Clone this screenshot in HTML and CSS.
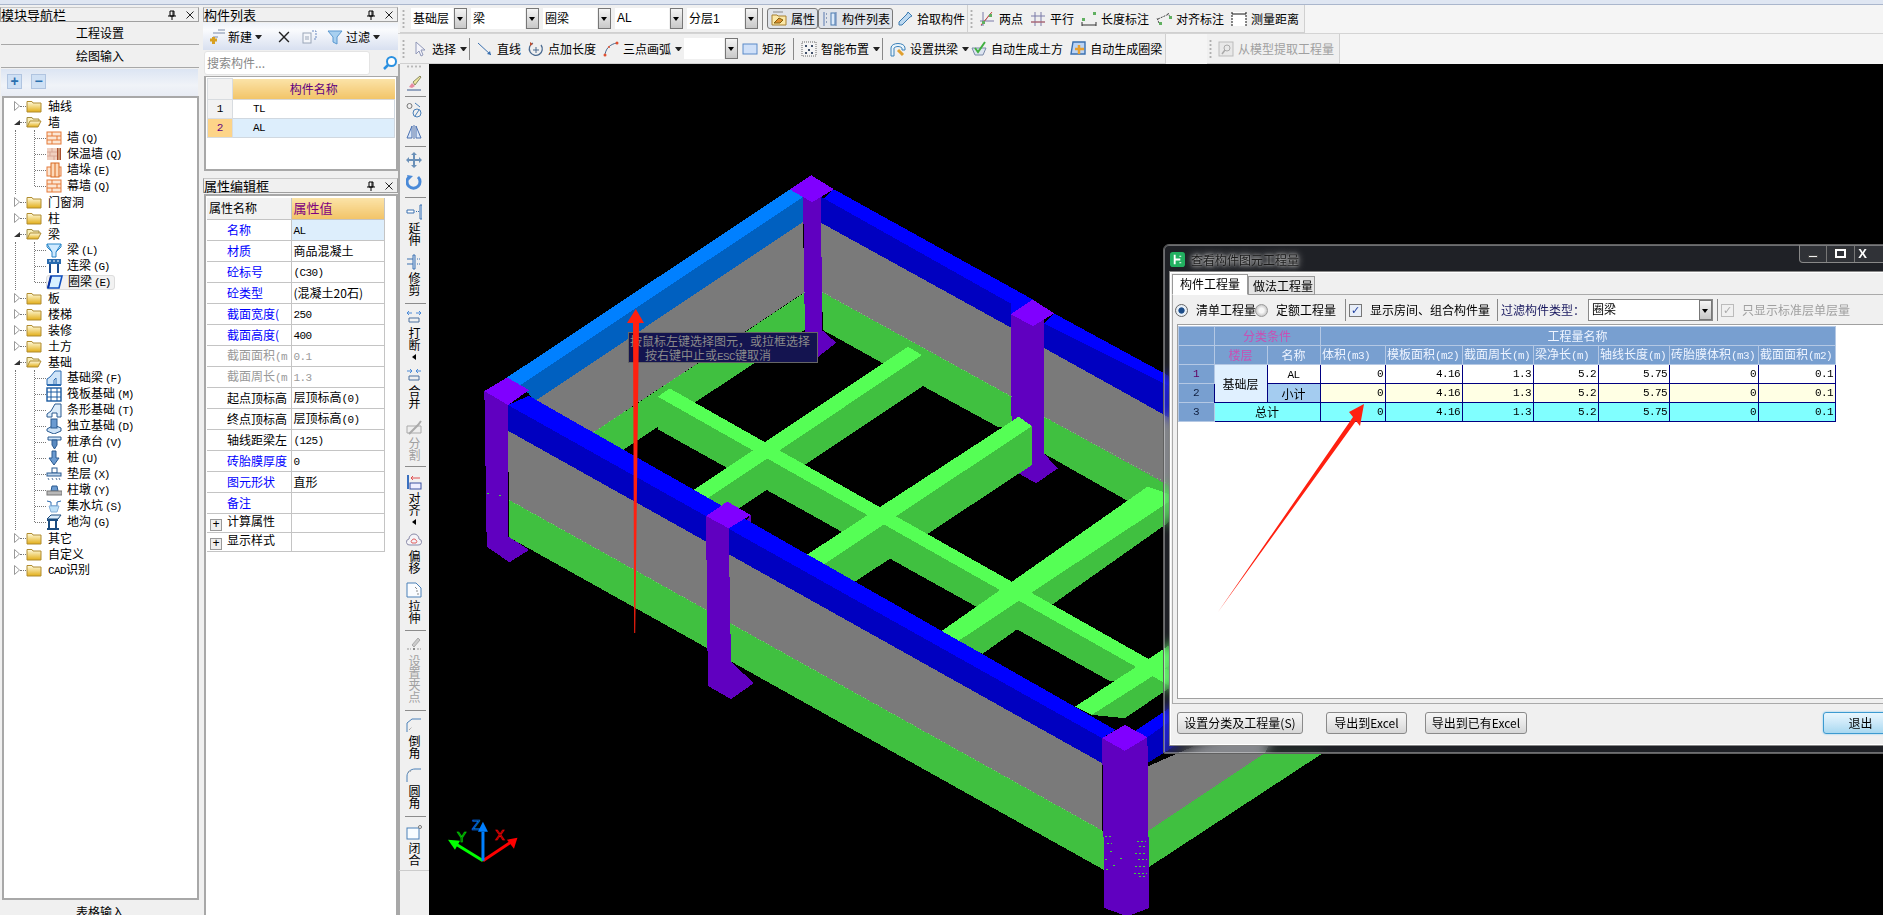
FILE: index.html
```html
<!DOCTYPE html>
<html lang="zh-CN">
<head>
<meta charset="utf-8">
<title>工程量</title>
<link rel="stylesheet" href="styles.css">
</head>
<body>
<svg class="defs" width="0" height="0" aria-hidden="true">
<defs>
<linearGradient id="gf" x1="0" y1="0" x2="0" y2="1"><stop offset="0" stop-color="#fffbe0"/><stop offset="1" stop-color="#e2ae18"/></linearGradient>
<symbol id="folder" viewBox="0 0 16 16"><path d="M1 3.5h5l1 1.5h8v9H1z" fill="url(#gf)" stroke="#b08c30"/></symbol>
<symbol id="folderopen" viewBox="0 0 16 16"><path d="M1 13V3.5h5l1 1.5h6v2" fill="#f8eeb8" stroke="#a08a40"/><path d="M1 13l3-6h11l-3 6z" fill="url(#gf)" stroke="#b08c30"/></symbol>
<symbol id="open" viewBox="0 0 6 10"><path d="M.5 .5l5 4.5-5 4.5z" fill="#fff" stroke="#999"/></symbol>
<symbol id="shut" viewBox="0 0 6 10"><path d="M0 8l6-5v5z" fill="#333"/></symbol>
<symbol id="brick" viewBox="0 0 16 16"><rect x="1" y="2" width="14" height="12" fill="#fbe6d4" stroke="#e57a38"/><path d="M1 6h14M1 10h14M6 2v4M11 6v4M6 10v4" stroke="#e57a38" fill="none"/></symbol>
<symbol id="insul" viewBox="0 0 16 16"><rect x="1" y="2" width="10" height="12" fill="#f0d0c0"/><path d="M1 6h10M1 10h10M6 2v4M4 6v4M8 10v4" stroke="#d8a898" fill="none"/><rect x="11" y="2" width="4" height="12" fill="#a85030"/><path d="M13 2v12" stroke="#f0d8b0"/></symbol>
<symbol id="pier" viewBox="0 0 16 16"><rect x="1" y="5" width="14" height="9" fill="#fbe6d4" stroke="#e57a38"/><rect x="5" y="1" width="8" height="14" fill="#fdd8b8" stroke="#d86820"/><path d="M9 1v14" stroke="#d86820"/></symbol>
<symbol id="bl" viewBox="0 0 16 16"><path d="M1 2h14v3l-5 5v5H6v-5L1 5z" fill="#cfeaff" stroke="#2a86c8"/><path d="M1 2l5 8M15 2l-5 8" stroke="#2a86c8"/></symbol>
<symbol id="lian" viewBox="0 0 16 16"><rect x="1" y="1" width="14" height="5" fill="#2a6cb0"/><path d="M3 3h2M7 3h2M11 3h2" stroke="#fff"/><path d="M4 6v9M12 6v9" stroke="#1a4c90" stroke-width="2"/></symbol>
<symbol id="quan" viewBox="0 0 16 16"><path d="M4 2h11l-3 12H1z" fill="#d8f0ff" stroke="#1050c0" stroke-width="1.6"/><path d="M4 2l-3 12" stroke="#0830a0" stroke-width="2"/></symbol>
<symbol id="f1" viewBox="0 0 16 16"><path d="M1 15V9l3-2 5-6h6v14H10V8L8 10v5z" fill="#cfe4f8" stroke="#2a6ab0"/><path d="M1 15h14" stroke="#2a6ab0" stroke-width="2"/></symbol>
<symbol id="f2" viewBox="0 0 16 16"><rect x="1" y="2" width="14" height="13" fill="#fff" stroke="#1a5aa0" stroke-width="1.4"/><path d="M1 6h14M1 11h14M5 2v13M11 2v13" stroke="#1a5aa0"/></symbol>
<symbol id="f3" viewBox="0 0 16 16"><path d="M1 15v-3l4-3 4-7h6v13H11v-4H6v4z" fill="#dcecfa" stroke="#2a5a90"/></symbol>
<symbol id="f4" viewBox="0 0 16 16"><path d="M1 11l7-4 7 3v3l-7 3-7-3z" fill="#cfe4f8" stroke="#2a5a90"/><rect x="5" y="1" width="6" height="9" fill="#6a9ad0" stroke="#2a5a90"/></symbol>
<symbol id="f5" viewBox="0 0 16 16"><path d="M2 3h13v3H2z" fill="#cfe4f8" stroke="#2a5a90"/><path d="M6 6h5v5l-2.500 4L6 11z" fill="#5a8ac0" stroke="#2a5a90"/></symbol>
<symbol id="f6" viewBox="0 0 16 16"><path d="M6 1h4v7h3l-5 7-5-7h3z" fill="#6a9ad0" stroke="#2a5a90"/></symbol>
<symbol id="f7" viewBox="0 0 16 16"><rect x="6" y="2" width="5" height="5" fill="#fff" stroke="#2a5a90"/><rect x="1" y="7" width="14" height="3" fill="#bcd4ec" stroke="#2a5a90"/><path d="M2 12l1 2M6 12l1 2M10 12l1 2M13 12l1 2" stroke="#5a7aa0"/></symbol>
<symbol id="f8" viewBox="0 0 16 16"><path d="M6 4h5l1 5H5z" fill="#6a9ad0" stroke="#2a5a90"/><rect x="1" y="9" width="15" height="4" fill="#b8b8b8" stroke="#777"/></symbol>
<symbol id="f9" viewBox="0 0 16 16"><path d="M1 3l4 1v4h6V4l4-1" fill="none" stroke="#2a6ab0"/><path d="M3 8l2 6h6l2-6z" fill="#bde0f8" stroke="#88b0d8"/></symbol>
<symbol id="f10" viewBox="0 0 16 16"><path d="M1 5l4-4h10l-3 4z" fill="#dcecfa" stroke="#1a4c80"/><rect x="1" y="5" width="11" height="2" fill="#1a4c80"/><path d="M3 7v7M10 7v7" stroke="#1a4c80" stroke-width="2"/><path d="M1 15h12" stroke="#1a4c80" stroke-width="2"/></symbol>
<symbol id="plusb" viewBox="0 0 16 16"><path d="M4 4h12M9 1h7M4 8h5" stroke="#7a8aa8" fill="none"/><path d="M1 11h7M4.500 8v7" stroke="#d8a020" stroke-width="3"/></symbol>
<symbol id="copyi" viewBox="0 0 16 16"><rect x="1" y="4" width="8" height="10" fill="#f4f6fa" stroke="#9aa6b8"/><path d="M3 8h4M3 10h4" stroke="#9aa6b8"/><path d="M10 2h4v8h-2" fill="none" stroke="#6a8ac0" stroke-dasharray="2 1"/></symbol>
<symbol id="funnel" viewBox="0 0 16 16"><path d="M1 2h14l-5 6v7l-4-2V8z" fill="#a8d0f0" stroke="#5a98d0"/></symbol>
<symbol id="glass" viewBox="0 0 16 16"><circle cx="9.500" cy="6.500" r="4.500" fill="#fff" stroke="#2a90e0" stroke-width="2"/><path d="M6 10l-4 4" stroke="#2a90e0" stroke-width="2.500"/></symbol>
<symbol id="pin" viewBox="0 0 10 10"><path d="M3 1h4v5H3zM1 6h8M5 6v4M6 1v5" fill="none" stroke="#000"/></symbol>
<symbol id="x" viewBox="0 0 10 10"><path d="M1.500 1.500l7 7M8.500 1.500l-7 7" stroke="#222" fill="none"/></symbol>
<symbol id="prop" viewBox="0 0 16 16"><path d="M1 4h5l1 1h8v9H1z" fill="#fbe8a8" stroke="#a88030"/><path d="M3 12l5-5 4 2-3 3z" fill="#e09030" stroke="#806010"/><path d="M2 1h10" stroke="#888"/></symbol>
<symbol id="list" viewBox="0 0 16 16"><path d="M2 1v14M14 1v14" stroke="#5a7ab0"/><path d="M4 3h2M4 7h2M4 11h2" stroke="#3a5a90" stroke-dasharray="1 1"/><rect x="9" y="2" width="4" height="12" fill="#dceafa" stroke="#4a7ab0"/></symbol>
<symbol id="drop" viewBox="0 0 16 16"><path d="M11 1l4 4-2 1-8 8H2v-3l8-8z" fill="#bcd8f0" stroke="#3a7ab0"/></symbol>
<symbol id="twop" viewBox="0 0 16 16"><path d="M4 1v14M1 10h14M12 2l-10 13" stroke="#7a7aa8" fill="none"/><path d="M13 1L2 14" stroke="#d05040"/><rect x="10" y="3" width="3" height="3" fill="#60b060"/><rect x="3" y="10" width="3" height="3" fill="#60b060"/></symbol>
<symbol id="para" viewBox="0 0 16 16"><path d="M5 1v14M11 1v14M1 5h14M1 11h14" stroke="#7a7aa8" fill="none"/><path d="M1 11h14" stroke="#c06060"/></symbol>
<symbol id="dim" viewBox="0 0 16 16"><path d="M1 14h14M1 11v4M15 11v4" stroke="#333" fill="none"/><rect x="1" y="7" width="3" height="3" fill="#60b060"/><rect x="12" y="1" width="3" height="3" fill="#60b060"/></symbol>
<symbol id="adim" viewBox="0 0 16 16"><path d="M2 8l11-5M3 12L1 7M14 6l-2-4" stroke="#444" stroke-dasharray="2 1" fill="none"/><rect x="3" y="11" width="3" height="3" fill="#60b060"/><rect x="13" y="5" width="3" height="3" fill="#60b060"/></symbol>
<symbol id="meas" viewBox="0 0 16 16"><rect x="1" y="1" width="14" height="14" fill="#fff"/><path d="M1 1v14M15 1v14" stroke="#111" stroke-dasharray="2 1"/><path d="M1 3h14" stroke="#111"/></symbol>
<symbol id="sel" viewBox="0 0 16 16"><path d="M4 1v12l3-3 2 5 2-1-2-5h4z" fill="#f4f4fa" stroke="#9098b8"/></symbol>
<symbol id="line" viewBox="0 0 16 16"><path d="M1 2l13 12" stroke="#3a70b0" fill="none"/><path d="M14 14l-4-1 3-3z" fill="#3a70b0"/></symbol>
<symbol id="ptlen" viewBox="0 0 16 16"><path d="M5 2a6.500 6.500 0 1 0 8 2" fill="none" stroke="#4a6a90" stroke-width="1.300"/><path d="M8 6v6M5 9h6" stroke="#4a6a90"/><path d="M2 1l3 2-3 2z" fill="#c05030"/></symbol>
<symbol id="arc" viewBox="0 0 16 16"><path d="M2 15C2 8 7 3 14 2" fill="none" stroke="#4a6a90"/><circle cx="2" cy="14" r="1.500" fill="#e05030"/><circle cx="14" cy="2" r="1.500" fill="#e05030"/><circle cx="6" cy="6" r="1" fill="#e05030"/></symbol>
<symbol id="rect" viewBox="0 0 16 16"><rect x="1" y="3" width="14" height="10" fill="#cfe0f8" stroke="#5a8ac8"/></symbol>
<symbol id="smart" viewBox="0 0 16 16"><rect x="1" y="1" width="14" height="14" fill="#f4f4f4" stroke="#666" stroke-dasharray="1 1"/><path d="M4 4h2v2H4zM10 4h2v2h-2zM7 8h2v2H7zM4 11h2v2H4zM10 11h2v2h-2z" fill="#40506a"/></symbol>
<symbol id="arch" viewBox="0 0 16 16"><path d="M1 7C1 1 15 1 15 7v2h-3V7C10 5 6 5 4 7v8H1z" fill="#e8f4fc" stroke="#3a80b8"/><path d="M8 9l5 5" stroke="#e0a030" stroke-width="3"/></symbol>
<symbol id="auto1" viewBox="0 0 16 16"><path d="M1 7l3 7h8l3-7z" fill="#dce4f0" stroke="#7a8aa8"/><path d="M4 7l3 4 7-10" fill="none" stroke="#40b040" stroke-width="2"/></symbol>
<symbol id="auto2" viewBox="0 0 16 16"><path d="M3 1h12v12H1z" fill="#bcd4f4" stroke="#3a70b0" stroke-width="1.400"/><path d="M9 4v9M5 8h9" stroke="#e8a030" stroke-width="2.500"/></symbol>
<symbol id="extract" viewBox="0 0 16 16"><rect x="1" y="1" width="14" height="14" fill="#e8e8e8" stroke="#bbb"/><circle cx="9" cy="7" r="3" fill="none" stroke="#aaa"/><path d="M7 9l-3 4" stroke="#aaa" stroke-width="1.500"/></symbol>
<symbol id="brush" viewBox="0 0 16 16"><path d="M1 15h14" stroke="#3a5a90"/><path d="M3 12l3-4 3 3-3 2z" fill="#e88aa0"/><path d="M7 7l7-6 1 1-6 8z" fill="#f0e8a0" stroke="#8a8a60"/></symbol>
<symbol id="link" viewBox="0 0 16 16"><circle cx="3.500" cy="4" r="2.500" fill="none" stroke="#777"/><circle cx="11" cy="11" r="4" fill="none" stroke="#4a80b8"/><path d="M9 14l4-6" stroke="#4a80b8"/><path d="M9 1l5 4" stroke="#4a80b8"/></symbol>
<symbol id="mirror" viewBox="0 0 16 16"><path d="M6 2L1 14h5zM10 2l5 12h-5z" fill="#dce8f8" stroke="#4a70b0"/><path d="M8 1v14" stroke="#4a70b0"/></symbol>
<symbol id="move" viewBox="0 0 16 16"><path d="M8 1v14M1 8h14" stroke="#6a90b8" stroke-width="2"/><path d="M8 0l3 3H5zM8 16l3-3H5zM0 8l3-3v6zM16 8l-3-3v6z" fill="#6a90b8"/></symbol>
<symbol id="rot" viewBox="0 0 16 16"><path d="M3 3a6.500 6.500 0 1 0 9 0" fill="none" stroke="#4a8ad8" stroke-width="3"/><path d="M1 1l6 1-4 4z" fill="#4a8ad8"/></symbol>
<symbol id="ext" viewBox="0 0 16 16"><path d="M1 6h7v3H1z" fill="#fff" stroke="#3a70b0"/><path d="M10 7.500h3" stroke="#3a70b0" stroke-dasharray="1 1"/><path d="M14 1h2v14h-2z" fill="#dce8f8" stroke="#3a70b0"/></symbol>
<symbol id="trim" viewBox="0 0 16 16"><path d="M1 5h6M1 10h6" stroke="#3a70b0"/><path d="M7 1h2v14H7z" fill="#dce8f8" stroke="#3a70b0"/><path d="M11 5h4M11 10h4" stroke="#3a70b0" stroke-dasharray="1 1"/></symbol>
<symbol id="brk" viewBox="0 0 16 16"><path d="M1 4h5M1 4l2-2M1 4l2 2M15 4h-5M15 4l-2-2M15 4l-2 2" stroke="#4a8ad8" fill="none"/><path d="M3 9h10M3 13h10M3 9v4M13 9v4" stroke="#4a70a0" fill="none"/></symbol>
<symbol id="mrg" viewBox="0 0 16 16"><path d="M1 4h5M6 4L4 2M6 4L4 6M15 4h-5M10 4l2-2M10 4l2 2" stroke="#4a8ad8" fill="none"/><path d="M3 9h10M3 13h10M3 9v4M13 9v4" stroke="#4a70a0" fill="none"/></symbol>
<symbol id="split" viewBox="0 0 16 16"><path d="M1 7h14v7H1z" fill="#eee" stroke="#aaa"/><path d="M3 15l9-9 3-4" stroke="#aaa" stroke-width="2" fill="none"/></symbol>
<symbol id="align" viewBox="0 0 16 16"><path d="M2 1v14" stroke="#3a70c0" stroke-width="2"/><path d="M14 4H5M5 4l2-2M5 4l2 2" stroke="#e05050" fill="none"/><rect x="4" y="9" width="11" height="6" fill="#eef" stroke="#3a50a0"/></symbol>
<symbol id="off" viewBox="0 0 16 16"><path d="M4 13a3 3 0 0 1-1-6 5 5 0 0 1 10 0 3 3 0 0 1-1 6z" fill="#f4f4f8" stroke="#8a8aa8"/><path d="M6 11a2 2 0 0 1 0-3 2.500 2.500 0 0 1 4 0 2 2 0 0 1 0 3z" fill="none" stroke="#e06060"/></symbol>
<symbol id="strch" viewBox="0 0 16 16"><path d="M1 1h9l5 5v9H1z" fill="#fafcff" stroke="#4a80b8"/><path d="M9 5l2 2M10 9h2M11 12h2" stroke="#888"/></symbol>
<symbol id="clamp" viewBox="0 0 16 16"><path d="M6 8l6-7 2 2-6 7z" fill="#ccc" stroke="#aaa"/><path d="M1 12h4M11 12h4" stroke="#999" stroke-dasharray="2 1"/><rect x="7" y="11" width="2" height="2" fill="#888"/></symbol>
<symbol id="cham" viewBox="0 0 16 16"><path d="M1 15V6l5-4h9" fill="none" stroke="#4a80b8"/><path d="M3 13l3-3" stroke="#888" stroke-dasharray="1 1"/></symbol>
<symbol id="fill" viewBox="0 0 16 16"><path d="M1 15V9C1 5 5 2 9 2h6" fill="none" stroke="#4a80b8"/><path d="M2 5l3-1" stroke="#888" stroke-dasharray="1 1"/></symbol>
<symbol id="close" viewBox="0 0 16 16"><rect x="1" y="4" width="12" height="11" fill="#f8fcff" stroke="#4a80b8"/><circle cx="14" cy="3" r="1.500" fill="#fff" stroke="#777"/></symbol>
</defs>
</svg>

<div class="app">
  <div class="topstrip"></div>
  <div class="main">
    <aside class="nav">
      <div class="ptitle"><span class="ptname">模块导航栏</span><svg class="pi"><use href="#pin"/></svg><svg class="pi"><use href="#x"/></svg></div>
      <div class="navbtn">工程设置</div>
      <div class="navbtn">绘图输入</div>
      <div class="navtools"><span class="sq">+</span><span class="sq">−</span></div>
      <div class="tree">
        <div class="row"><svg class="exp"><use href="#open"/></svg><i class="dot"></i><svg class="ic"><use href="#folder"/></svg><span class="lb">轴线</span></div>
        <div class="row"><svg class="exp"><use href="#shut"/></svg><i class="dot"></i><svg class="ic"><use href="#folderopen"/></svg><span class="lb">墙</span></div>
        <div class="kids">
          <div class="row kid"><i class="kdot"></i><svg class="ic"><use href="#brick"/></svg><span class="lb">墙<b class="m k">(Q)</b></span></div>
          <div class="row kid"><i class="kdot"></i><svg class="ic"><use href="#insul"/></svg><span class="lb">保温墙<b class="m k">(Q)</b></span></div>
          <div class="row kid"><i class="kdot"></i><svg class="ic"><use href="#pier"/></svg><span class="lb">墙垛<b class="m k">(E)</b></span></div>
          <div class="row kid"><i class="kdot"></i><svg class="ic"><use href="#brick"/></svg><span class="lb">幕墙<b class="m k">(Q)</b></span></div>
        </div>
        <div class="row"><svg class="exp"><use href="#open"/></svg><i class="dot"></i><svg class="ic"><use href="#folder"/></svg><span class="lb">门窗洞</span></div>
        <div class="row"><svg class="exp"><use href="#open"/></svg><i class="dot"></i><svg class="ic"><use href="#folder"/></svg><span class="lb">柱</span></div>
        <div class="row"><svg class="exp"><use href="#shut"/></svg><i class="dot"></i><svg class="ic"><use href="#folderopen"/></svg><span class="lb">梁</span></div>
        <div class="kids">
          <div class="row kid"><i class="kdot"></i><svg class="ic"><use href="#bl"/></svg><span class="lb">梁<b class="m k">(L)</b></span></div>
          <div class="row kid"><i class="kdot"></i><svg class="ic"><use href="#lian"/></svg><span class="lb">连梁<b class="m k">(G)</b></span></div>
          <div class="row kid"><i class="kdot"></i><span class="selbox"><svg class="ic"><use href="#quan"/></svg><span class="lb">圈梁<b class="m k">(E)</b></span></span></div>
        </div>
        <div class="row"><svg class="exp"><use href="#open"/></svg><i class="dot"></i><svg class="ic"><use href="#folder"/></svg><span class="lb">板</span></div>
        <div class="row"><svg class="exp"><use href="#open"/></svg><i class="dot"></i><svg class="ic"><use href="#folder"/></svg><span class="lb">楼梯</span></div>
        <div class="row"><svg class="exp"><use href="#open"/></svg><i class="dot"></i><svg class="ic"><use href="#folder"/></svg><span class="lb">装修</span></div>
        <div class="row"><svg class="exp"><use href="#open"/></svg><i class="dot"></i><svg class="ic"><use href="#folder"/></svg><span class="lb">土方</span></div>
        <div class="row"><svg class="exp"><use href="#shut"/></svg><i class="dot"></i><svg class="ic"><use href="#folderopen"/></svg><span class="lb">基础</span></div>
        <div class="kids">
          <div class="row kid"><i class="kdot"></i><svg class="ic"><use href="#f1"/></svg><span class="lb">基础梁<b class="m k">(F)</b></span></div>
          <div class="row kid"><i class="kdot"></i><svg class="ic"><use href="#f2"/></svg><span class="lb">筏板基础<b class="m k">(M)</b></span></div>
          <div class="row kid"><i class="kdot"></i><svg class="ic"><use href="#f3"/></svg><span class="lb">条形基础<b class="m k">(T)</b></span></div>
          <div class="row kid"><i class="kdot"></i><svg class="ic"><use href="#f4"/></svg><span class="lb">独立基础<b class="m k">(D)</b></span></div>
          <div class="row kid"><i class="kdot"></i><svg class="ic"><use href="#f5"/></svg><span class="lb">桩承台<b class="m k">(V)</b></span></div>
          <div class="row kid"><i class="kdot"></i><svg class="ic"><use href="#f6"/></svg><span class="lb">桩<b class="m k">(U)</b></span></div>
          <div class="row kid"><i class="kdot"></i><svg class="ic"><use href="#f7"/></svg><span class="lb">垫层<b class="m k">(X)</b></span></div>
          <div class="row kid"><i class="kdot"></i><svg class="ic"><use href="#f8"/></svg><span class="lb">柱墩<b class="m k">(Y)</b></span></div>
          <div class="row kid"><i class="kdot"></i><svg class="ic"><use href="#f9"/></svg><span class="lb">集水坑<b class="m k">(S)</b></span></div>
          <div class="row kid"><i class="kdot"></i><svg class="ic"><use href="#f10"/></svg><span class="lb">地沟<b class="m k">(G)</b></span></div>
        </div>
        <div class="row"><svg class="exp"><use href="#open"/></svg><i class="dot"></i><svg class="ic"><use href="#folder"/></svg><span class="lb">其它</span></div>
        <div class="row"><svg class="exp"><use href="#open"/></svg><i class="dot"></i><svg class="ic"><use href="#folder"/></svg><span class="lb">自定义</span></div>
        <div class="row"><svg class="exp"><use href="#open"/></svg><i class="dot"></i><svg class="ic"><use href="#folder"/></svg><span class="lb"><b class="m">CAD</b>识别</span></div>
      </div>
      <div class="navbtn navlast">表格输入</div>
    </aside>

    <section class="side">
      <div class="ptitle"><span class="ptname">构件列表</span><svg class="pi"><use href="#pin"/></svg><svg class="pi"><use href="#x"/></svg></div>
      <div class="listtools">
        <svg class="ic"><use href="#plusb"/></svg><span>新建</span><i class="caret"></i>
        <svg class="xbig"><use href="#x"/></svg>
        <svg class="ic"><use href="#copyi"/></svg>
        <svg class="ic"><use href="#funnel"/></svg><span>过滤</span><i class="caret"></i>
      </div>
      <div class="searchrow"><div class="search">搜索构件...</div><svg class="ic"><use href="#glass"/></svg></div>
      <div class="listbox">
        <table class="clist">
          <tr class="h"><th class="c0"></th><th class="hot">构件名称</th></tr>
          <tr><td class="c0">1</td><td class="nm">TL</td></tr>
          <tr class="on"><td class="c0">2</td><td class="nm">AL</td></tr>
        </table>
      </div>
      <div class="ptitle ptprop"><span class="ptname">属性编辑框</span><svg class="pi"><use href="#pin"/></svg><svg class="pi"><use href="#x"/></svg></div>
      <div class="propbox">
        <table class="props">
          <tr class="ph"><th>属性名称</th><th class="hot2">属性值</th></tr>
          <tr class="blue first"><td><span>名称</span></td><td><b class="m">AL</b></td></tr>
          <tr class="blue"><td><span>材质</span></td><td>商品混凝土</td></tr>
          <tr class="blue"><td><span>砼标号</span></td><td><b class="m">(C30)</b></td></tr>
          <tr class="blue"><td><span>砼类型</span></td><td>(混凝土20石)</td></tr>
          <tr class="blue"><td><span>截面宽度(</span></td><td><b class="m">250</b></td></tr>
          <tr class="blue"><td><span>截面高度(</span></td><td><b class="m">400</b></td></tr>
          <tr class="gray"><td><span>截面面积<b class="m">(m</b></span></td><td><b class="m">0.1</b></td></tr>
          <tr class="gray"><td><span>截面周长<b class="m">(m</b></span></td><td><b class="m">1.3</b></td></tr>
          <tr><td><span>起点顶标高</span></td><td>层顶标高<b class="m">(0)</b></td></tr>
          <tr><td><span>终点顶标高</span></td><td>层顶标高<b class="m">(0)</b></td></tr>
          <tr><td><span>轴线距梁左</span></td><td><b class="m">(125)</b></td></tr>
          <tr class="blue"><td><span>砖胎膜厚度</span></td><td><b class="m">0</b></td></tr>
          <tr class="blue"><td><span>图元形状</span></td><td>直形</td></tr>
          <tr class="blue"><td><span>备注</span></td><td></td></tr>
          <tr class="grp"><td><i class="pm">+</i>计算属性</td><td></td></tr>
          <tr class="grp"><td><i class="pm">+</i>显示样式</td><td></td></tr>
        </table>
      </div>
    </section>

    <div class="work">
      <div class="tbrow r1">
        <div class="tb tb1">
          <i class="grip"></i>
          <div class="combo w56"><span>基础层</span><i class="cbtn"></i></div>
          <div class="combo w68"><span>梁</span><i class="cbtn"></i></div>
          <div class="combo w68"><span>圈梁</span><i class="cbtn"></i></div>
          <div class="combo w68"><span class="lat">AL</span><i class="cbtn"></i></div>
          <div class="combo w71"><span>分层<b class="lat">1</b></span><i class="cbtn"></i></div>
          <i class="vsep"></i>
          <div class="tog t51"><svg class="ic"><use href="#prop"/></svg>属性</div>
          <div class="tog t75"><svg class="ic"><use href="#list"/></svg>构件列表</div>
          <div class="ti"><svg class="ic"><use href="#drop"/></svg>拾取构件</div>
        </div>
        <div class="tb tb2">
          <i class="grip"></i>
          <div class="ti"><svg class="ic"><use href="#twop"/></svg>两点</div>
          <div class="ti"><svg class="ic"><use href="#para"/></svg>平行</div>
          <div class="ti"><svg class="ic"><use href="#dim"/></svg>长度标注</div>
          <div class="ti"><svg class="ic"><use href="#adim"/></svg>对齐标注</div>
          <div class="ti"><svg class="ic"><use href="#meas"/></svg>测量距离</div>
        </div>
      </div>
      <div class="tbrow r2">
        <div class="tb tb3">
          <i class="grip"></i>
          <div class="ti"><svg class="ic"><use href="#sel"/></svg>选择</div><i class="caret car"></i>
          <i class="vsep"></i>
          <div class="ti"><svg class="ic"><use href="#line"/></svg>直线</div>
          <div class="ti"><svg class="ic"><use href="#ptlen"/></svg>点加长度</div>
          <div class="ti"><svg class="ic"><use href="#arc"/></svg>三点画弧</div><i class="caret car"></i>
          <div class="combo w54"><span></span><i class="cbtn"></i></div>
          <div class="ti"><svg class="ic"><use href="#rect"/></svg>矩形</div>
          <i class="vsep"></i>
          <div class="ti"><svg class="ic"><use href="#smart"/></svg>智能布置</div><i class="caret car"></i>
          <i class="vsep"></i>
          <div class="ti"><svg class="ic"><use href="#arch"/></svg>设置拱梁</div><i class="caret car"></i>
          <div class="ti"><svg class="ic"><use href="#auto1"/></svg>自动生成土方</div>
          <div class="ti"><svg class="ic"><use href="#auto2"/></svg>自动生成圈梁</div>
        </div>
        <div class="tb tb4">
          <i class="grip"></i>
          <div class="ti dis"><svg class="ic"><use href="#extract"/></svg>从模型提取工程量</div>
        </div>
      </div>
      <div class="stage">
        <nav class="vt">
          <i class="vgrip"></i>
          <div class="vi"><svg class="ic"><use href="#brush"/></svg></div>
          <i class="hs"></i>
          <div class="vi"><svg class="ic"><use href="#link"/></svg></div>
          <div class="vi"><svg class="ic"><use href="#mirror"/></svg></div>
          <i class="hs"></i>
          <div class="vi"><svg class="ic"><use href="#move"/></svg></div>
          <div class="vi"><svg class="ic"><use href="#rot"/></svg></div>
          <i class="hs"></i>
          <div class="vi"><svg class="ic"><use href="#ext"/></svg><span class="vtx">延伸</span></div>
          <div class="vi"><svg class="ic"><use href="#trim"/></svg><span class="vtx">修剪</span></div>
          <i class="hs"></i>
          <div class="vi"><svg class="ic"><use href="#brk"/></svg><span class="vtx">打断</span><i class="lcaret"></i></div>
          <div class="vi"><svg class="ic"><use href="#mrg"/></svg><span class="vtx">合并</span></div>
          <div class="vi dis"><svg class="ic"><use href="#split"/></svg><span class="vtx">分割</span></div>
          <i class="hs"></i>
          <div class="vi"><svg class="ic"><use href="#align"/></svg><span class="vtx">对齐</span><i class="lcaret"></i></div>
          <div class="vi"><svg class="ic"><use href="#off"/></svg><span class="vtx">偏移</span></div>
          <div class="vi"><svg class="ic"><use href="#strch"/></svg><span class="vtx">拉伸</span></div>
          <i class="hs"></i>
          <div class="vi dis"><svg class="ic"><use href="#clamp"/></svg><span class="vtx">设置夹点</span></div>
          <i class="hs"></i>
          <div class="vi"><svg class="ic"><use href="#cham"/></svg><span class="vtx">倒角</span></div>
          <div class="vi"><svg class="ic"><use href="#fill"/></svg><span class="vtx">圆角</span></div>
          <i class="hs"></i>
          <div class="vi vlast"><svg class="ic"><use href="#close"/></svg><span class="vtx">闭合</span></div>
        </nav>
        <div class="canvas">
          <svg class="model" viewBox="428 64 1455 851" shape-rendering="crispEdges">
            <g transform="translate(440 160) scale(.4719 .33333)">
              <polygon class="gr" points="772,397 772,509 380,875 318,822"/>
              <polygon class="gy" points="768,185 770,397 318,822 197,725"/>
              <polygon class="lb1" points="740,88 768,110 165,678 137,655"/>
              <polygon class="lb2" points="768,110 768,185 197,725 186,700 165,678"/>
              <polygon class="gr" points="808,395 1210,710 1210,800 1180,800 1022,678 935,608 810,510"/>
              <polygon class="gr" points="1278,770 1560,985 1560,1020 1500,985 1465,1030 1278,880"/>
              <polygon class="gy" points="806,188 806,395 1210,710 1210,502"/>
              <polygon class="gy" points="1278,563 1560,780 1560,990 1278,770"/>
              <polygon class="b1" points="833,87 1255,418 1208,462 806,125"/>
              <polygon class="b2" points="806,110 1208,430 1208,502 806,188"/>
              <polygon class="b1" points="1300,460 1560,660 1560,690 1278,490"/>
              <polygon class="b2" points="1278,490 1560,690 1560,785 1278,563"/>
              <polygon class="pd" points="768,108 806,108 808,510 838,548 800,590 772,560"/>
              <polygon class="pt" points="785,45 833,87 787,126 740,88"/>
              <polygon class="pd" points="1208,462 1278,462 1278,880 1308,925 1262,970 1225,940 1210,800"/>
              <polygon class="pt" points="1255,418 1300,460 1255,498 1208,462"/>
              <polygon class="gr" points="1020,585 1022,678 590,1085 560,1020"/>
              <polygon class="gr" points="1253,798 1253,915 875,1268 810,1215"/>
              <polygon class="gr" points="1560,1005 1560,1070 1148,1482 1095,1445"/>
              <polygon class="gr" points="1560,1503 1560,1570 1450,1675 1380,1665"/>
              <polygon class="gr" points="460,710 460,808 1420,1565 1560,1555"/>
              <polygon class="lg" points="990,560 1020,585 560,1020 530,995"/>
              <polygon class="lg" points="1225,770 1253,798 810,1215 775,1185"/>
              <polygon class="lg" points="1498,980 1560,1010 1095,1445 1060,1415"/>
              <polygon class="lg" points="1560,1442 1560,1503 1380,1665 1345,1640"/>
              <polygon class="lg" points="485,685 1560,1545 1560,1590 460,710"/>
              <polygon class="pd" points="657,1065 657,1105 610,1140"/>
              <polygon class="gy" points="142,812 1402,1810 1402,2015 144,1020"/>
              <polygon class="gr" points="144,1020 1405,2015 1405,2130 144,1132"/>
              <polygon class="b1" points="186,707 1430,1710 1402,1735 142,735"/>
              <polygon class="b2" points="142,735 1402,1735 1402,1810 142,812"/>
              <path class="edge" d="M808 395L1210 710M1278 770L1560 985M772 397L318 822M144 1020L1405 2015"/>
              <polygon class="gy" points="1498,1820 1498,2015 1748,1779 1790,1640"/>
              <polygon class="gr" points="1498,2015 1498,2125 1871,1779 1748,1779"/>
              <polygon class="b1" points="1470,1715 1560,1630 1560,1670 1498,1732"/>
              <polygon class="b2" points="1498,1732 1560,1670 1560,1755 1498,1810"/>
              <polygon class="pd" points="92,693 142,735 143,1130 187,1170 145,1207 97,1160"/>
              <polygon class="pt" points="140,652 187,690 142,735 92,693"/>
              <polygon class="pd" points="562,1068 610,1105 615,1505 663,1570 615,1618 566,1578"/>
              <polygon class="pt" points="607,1025 657,1065 610,1105 562,1068"/>
              <polygon class="pd" points="1402,1735 1498,1732 1502,2245 1455,2270 1407,2245"/>
              <polygon class="pt" points="1450,1695 1498,1732 1450,1773 1402,1735"/>
              <path class="spk" d="M1408 2030h12M1412 2050h10M1418 2075h10M1408 2100h8M1425 2118h8M1440 2095h8M1410 2128h6M1475 2045h20M1480 2060h16M1472 2080h24M1478 2100h20M1472 2120h24M1470 2140h28M1480 2150h16M98 1000h6M122 1008h8"/>
            </g>
            <g class="axes" shape-rendering="auto">
              <path class="ax-g" d="M482 861L456 845"/><polygon class="ax-gf" points="447,840 459,841 454,850"/>
              <path class="ax-r" d="M482 861L509 843"/><polygon class="ax-rf" points="516.500,838 513,849 506,840"/>
              <path class="ax-b" d="M482 861V832"/><polygon class="ax-bf" points="482,822 487,832 477,832"/>
              <text class="tz" x="471" y="830">Z</text>
              <text class="ty" x="456" y="842">Y</text>
              <text class="tx" x="494" y="840">X</text>
            </g>
          </svg>
          <div class="tip"><div>按鼠标左键选择图元，或拉框选择</div><div class="tip2">按右键中止或<b class="m">ESC</b>键取消</div></div>
        </div>
      </div>
    </div>
  </div>

  <div class="dlg">
    <div class="cap">
      <svg class="capic" viewBox="0 0 16 16"><rect width="16" height="16" rx="3" fill="#22b060"/><path d="M5 3v10M5 8h6M11 4v1M11 11v1" stroke="#fff" stroke-width="2"/></svg>
      <span class="captx">查看构件图元工程量</span>
      <div class="wbtns"><span class="wb wmin"><i></i></span><span class="wb wmax"><i></i></span><span class="wb wcl">X</span></div>
    </div>
    <div class="client">
      <div class="tabs"><span class="tab on">构件工程量</span><span class="tab">做法工程量</span></div>
      <div class="tabpanel">
        <div class="filt">
          <span class="radio on"></span><span class="ft f1">清单工程量</span>
          <span class="radio"></span><span class="ft f2">定额工程量</span>
          <i class="fsep"></i>
          <span class="chk">✓</span><span class="ft f3">显示房间、组合构件量</span>
          <i class="fsep"></i>
          <span class="ft f4">过滤构件类型：</span>
          <div class="fcombo"><span>圈梁</span><i class="cbtn"></i></div>
          <i class="fsep"></i>
          <span class="chk dis">✓</span><span class="ft f5">只显示标准层单层量</span>
        </div>
        <div class="gridbox">
          <table class="qty">
            <colgroup><col class="c36"><col class="c53"><col class="c53"><col class="c65"><col class="c77"><col class="c71"><col class="c65"><col class="c71b"><col class="c88"><col class="c78"></colgroup>
            <tr class="hd"><td></td><td colspan="2" class="pink">分类条件</td><td colspan="7">工程量名称</td></tr>
            <tr class="hd"><td></td><td class="pink">楼层</td><td>名称</td><td class="lft">体积<b class="m">(m3)</b></td><td class="lft">模板面积<b class="m">(m2)</b></td><td class="lft">截面周长<b class="m">(m)</b></td><td class="lft">梁净长<b class="m">(m)</b></td><td class="lft">轴线长度<b class="m">(m)</b></td><td class="lft">砖胎膜体积<b class="m">(m3)</b></td><td class="lft">截面面积<b class="m">(m2)</b></td></tr>
            <tr class="d w"><td class="rh pur">1</td><td rowspan="2" class="base">基础层</td><td class="ctr"><b class="m">AL</b></td><td>0</td><td>4.16</td><td>1.3</td><td>5.2</td><td>5.75</td><td>0</td><td>0.1</td></tr>
            <tr class="d y"><td class="rh">2</td><td class="sub">小计</td><td>0</td><td>4.16</td><td>1.3</td><td>5.2</td><td>5.75</td><td>0</td><td>0.1</td></tr>
            <tr class="d c"><td class="rh">3</td><td colspan="2" class="ctr tot">总计</td><td>0</td><td>4.16</td><td>1.3</td><td>5.2</td><td>5.75</td><td>0</td><td>0.1</td></tr>
          </table>
        </div>
      </div>
      <div class="foot">
        <span class="btn b1w">设置分类及工程量(S)</span>
        <span class="btn b2w">导出到Excel</span>
        <span class="btn b3w">导出到已有Excel</span>
        <span class="btn quit">退出</span>
      </div>
    </div>
  </div>

  <svg class="notes" viewBox="0 0 1883 915">
    <polygon points="635.800,309 627,323 633,323 634.200,633 635.200,633 639,323 644,323"/>
    <polygon points="1364,404 1349,412 1353,417 1218,612 1356,421 1360,426"/>
  </svg>
</div>
</body>
</html>
```
FILE: styles.css
```css
* { box-sizing: border-box; }
html, body { margin: 0; height: 100%; overflow: hidden; }
body { font: 12px/14px "Noto Sans CJK SC", "Liberation Sans", sans-serif; color: #000; background: #f0f0f0; }
.defs { position: absolute; }
b.m, .m { font: 11px/14px "Liberation Mono", monospace; letter-spacing: -.6px; white-space: pre; }
b.k { margin-left: 2px; letter-spacing: -1.2px; }
i { font-style: normal; display: block; }
svg.ic { width: 16px; height: 16px; flex: none; display: block; }

.app { position: relative; width: 1883px; height: 915px; overflow: hidden; display: flex; flex-direction: column; }
.topstrip { height: 5px; flex: none; background: #dfe6f2; border-bottom: 1px solid #aab6cc; }
.main { flex: 1; min-height: 0; display: flex; }

/* panels */
.ptitle { height: 15px; margin-top: 2px; flex: none; display: flex; align-items: center; gap: 8px; padding-right: 3px; border: 1px solid #a0a0a0; border-top-color: #c8c8c8; background: #f0f0f0; }
.ptname { flex: 1; font-size: 13px; line-height: 13px; white-space: nowrap; }
.pi { width: 10px; height: 10px; }
.nav { width: 200px; flex: none; display: flex; flex-direction: column; padding-right: 1px; }
.navbtn { height: 23px; flex: none; text-align: center; line-height: 22px; font-size: 12px; border-bottom: 1px solid #a8a8a8; margin-left: 1px; }
.navtools { height: 27px; flex: none; margin: 1px 1px 0; padding: 5px 6px 0; display: flex; gap: 9px; background: linear-gradient(#dce5f3, #f0f3f8 60%, #e8ecf4); }
.sq { width: 15px; height: 15px; background: #cfe0f4; border: 1px solid #b0c4e0; color: #2a70b0; font: bold 14px/12px "Liberation Sans", sans-serif; text-align: center; }
.tree { height: 804px; flex: none; margin: 0 0 0 2px; background: #fff; border: 2px solid #a8a8a8; border-bottom-width: 2px; position: relative; }
.row { height: 16px; display: flex; align-items: center; position: relative; }
.exp { width: 6px; height: 10px; margin-left: 10px; flex: none; }
.dot { width: 6px; border-top: 1px dotted #777; flex: none; }
.lb { margin-left: 6px; white-space: nowrap; }
.kids { position: relative; }
.kids::before { content: ""; position: absolute; left: 30px; top: 0; bottom: 8px; border-left: 1px dotted #777; }
.kids::after { content: ""; position: absolute; left: 11px; top: 0; bottom: 0; border-left: 1px dotted #777; }
.kdot { width: 11px; margin-left: 31px; border-top: 1px dotted #777; flex: none; }
.kid .lb { margin-left: 5px; }
.selbox { display: flex; align-items: center; height: 15px; padding-right: 4px; background: #f2f2f2; border: 1px solid #ddd; border-radius: 3px; }
.navlast { margin-top: 2px; line-height: 20px; border: 0; height: 13px; overflow: hidden; }

.side { width: 198px; flex: none; display: flex; flex-direction: column; padding-left: 3px; }
.listtools { height: 27px; flex: none; display: flex; align-items: center; padding-left: 6px; gap: 3px; margin-top: 1px; background: linear-gradient(#eef2f9, #fafbfd 25%, #d8e0f0); }
.listtools .caret { margin-left: 0; }
.listtools .xbig { width: 14px; height: 14px; margin: 0 8px 0 12px; }
.listtools svg:nth-of-type(4) { margin-left: 6px; }
.searchrow { height: 26px; flex: none; display: flex; align-items: center; gap: 12px; padding-left: 1px; }
.search { width: 168px; height: 24px; background: #fff; border: 1px solid #e4e4e4; border-radius: 3px; color: #888; padding: 4px 2px; }
.listbox { height: 95px; flex: none; margin-left: 1px; background: #fff; border: 2px solid #a8a8a8; border-top-width: 1px; padding: 1px 1px 0; }
.clist { width: 188px; border-collapse: collapse; table-layout: fixed; }
.clist th, .clist td { padding: 0; font-weight: 400; }
.clist .c0 { width: 25px; background: #f2f2f2; text-align: center; border: 1px solid #d8dce0; font: 11px "Liberation Mono", monospace; }
.clist .h { height: 21px; }
.clist tr { height: 19px; }
.hot { background: linear-gradient(#fbe3a8, #f2c468); color: #600080; border-bottom: 1px solid #d8d8d8; }
.clist .nm { font: 11px "Liberation Mono", monospace; letter-spacing: -.6px; padding-left: 20px; border-bottom: 1px solid #d0d8e0; border-right: 1px solid #d0d8e0; }
.clist .on td { background: #ddeefc; }
.clist .on .c0 { background: #fdd488; color: #600080; }
.ptprop { margin-top: 7px; }
.propbox { flex: 1; margin: 1px 0 0 1px; background: #fff; border: 2px solid #a8a8a8; border-bottom: 0; padding: 2px 0 0 1px; }
.props { width: 178px; table-layout: fixed; border-collapse: collapse; }
.props td, .props th { padding: 0; height: 21px; border: 1px solid #c4c4c4; border-width: 0 1px 1px 0; overflow: hidden; white-space: nowrap; font-weight: 400; }
.props td:first-child, .props th:first-child { width: 84px; }
.props td:first-child span { margin-left: 20px; }
.props td:last-child { padding-left: 2px; }
.ph th { background: #f2f2f2; text-align: left; padding-left: 2px; }
.props .hot2 { background: linear-gradient(#fbe3a8, #f2c468); color: #800080; padding-left: 2px; font-size: 13px; }
.props .first td:last-child { background: #ddeefc; }
.blue td:first-child { color: #0000ff; }
.gray td { color: #999; }
.grp td { height: 19px; }
.pm { display: inline-block; width: 12px; height: 12px; margin: 0 5px 0 3px; border: 1px solid #999; background: #eee; font: 12px/10px "Liberation Mono", monospace; text-align: center; vertical-align: -2px; }

/* toolbars */
.work { flex: 1; min-width: 0; display: flex; flex-direction: column; }
.tbrow { height: 30px; flex: none; display: flex; padding-left: 2px; background: #f5f5f5; }
.tbrow.r1 { height: 29px; border-bottom: 1px solid #d4d4d4; }
.tb { display: flex; align-items: center; height: 100%; background: #f0f0f0; border-right: 1px solid #d0d0d0; border-bottom: 1px solid #d0d0d0; }
.grip { width: 3px; height: 20px; margin: 0 2px; flex: none; background: radial-gradient(circle, #b0b0b0 1px, transparent 1.2px) 0 0 / 3px 4px; }
.tb1 { width: 568px; gap: 4px; }
.tb1 .grip { margin-right: 2px; }
.tb2 { width: 337px; gap: 7px; }
.tb2 .grip { margin-right: -1px; }
.tb3 { width: 766px; gap: 7px; }
.tb3 .grip { margin-right: 0; }
.tb4 { width: 133px; margin-left: 41px; gap: 6px; }
.tb4 .grip { margin-right: 0; }
.combo { height: 21px; display: flex; gap: 1px; flex: none; }
.combo span { flex: 1; background: #fff; padding: 3px 2px; white-space: nowrap; overflow: hidden; }
.lat { font-family: "Liberation Sans", sans-serif; font-weight: 400; }
.w56 { width: 56px; }
.w68 { width: 68px; }
.w71 { width: 71px; }
.w54 { width: 54px; margin-right: -3px; }
.cbtn { width: 13px; flex: none; position: relative; background: linear-gradient(#f4f4f4, #c8c8c8); border: 1px solid #777; }
.cbtn::after { content: ""; position: absolute; left: 2px; top: 8px; border: 3.500px solid transparent; border-top: 4px solid #000; border-bottom: 0; }
.vsep { width: 1px; height: 22px; background: #888; flex: none; }
.tog { height: 21px; display: flex; align-items: center; gap: 4px; flex: none; padding-left: 3px; background: #e0e4ea; border: 1px solid #7a7a7a; border-radius: 3px; }
.t51 { width: 51px; }
.t75 { width: 75px; margin-left: -4px; }
.ti { display: flex; align-items: center; gap: 4px; white-space: nowrap; flex: none; }
.dis { color: #a0a0a0; }
.caret { width: 7px; height: 4px; flex: none; border: 3.500px solid transparent; border-top: 4px solid #222; border-bottom: 0; }
.car { margin-left: -3px; margin-right: -5px; }

/* vertical toolbar + canvas */
.stage { flex: 1; min-height: 0; display: flex; }
.vt { width: 31px; flex: none; border-left: 2px solid #a8a8a8; background: #f0f0f0; display: grid; grid-template-rows: 11px 21px 6px 22px 22px 6px 22px 23px 7px 50px 49px 6px 58px 52px 47px 8px 58px 50px 48px 7px 73px 7px 50px 49px 8px 47px 1fr; }
.vgrip { height: 3px; margin: 1px 6px 0; background: radial-gradient(circle, #b8b8b8 1px, transparent 1.2px) 0 0 / 4px 3px; }
.vi { display: flex; flex-direction: column; align-items: center; gap: 2px; margin-left: -1px; }
.vlast { border-bottom: 1px solid #ccc; }
.vtx { writing-mode: vertical-rl; text-orientation: upright; line-height: 14px; }
.hs { height: 1px; margin: 0 3px 0 5px; background: #8c8c8c; }
.lcaret { width: 0; height: 0; border: 3px solid transparent; border-right: 4px solid #000; border-left: 0; margin-top: 1px; }
.canvas { flex: 1; min-width: 0; position: relative; background: #000; overflow: hidden; }
.model { display: block; width: 100%; height: 100%; }
.gr { fill: #40c040; }
.gy { fill: #7a7a7a; }
.lg { fill: #55ff55; }
.b1 { fill: #0000ff; }
.b2 { fill: #0000c0; }
.lb1 { fill: #0080ff; }
.lb2 { fill: #0060c0; }
.pd { fill: #6000c0; }
.pt { fill: #8000ff; }
.edge { fill: none; stroke: #70ff70; stroke-width: .6; vector-effect: non-scaling-stroke; stroke-dasharray: 1 2; }
.spk { fill: none; stroke: #40d040; stroke-width: 1; vector-effect: non-scaling-stroke; stroke-dasharray: 2 2; }
.ax-g { stroke: #00ff00; stroke-width: 3; }
.ax-r { stroke: #ff0000; stroke-width: 3; }
.ax-b { stroke: #0080ff; stroke-width: 3; }
.ax-gf { fill: #00ff00; }
.ax-rf { fill: #ff0000; }
.ax-bf { fill: #0080ff; }
.axes text { font: 14px "Liberation Sans", sans-serif; fill: none; stroke-width: .7; }
.tz { stroke: #0080ff; }
.ty { stroke: #00e000; }
.tx { stroke: #ff0000; }
.tip { position: absolute; left: 199px; top: 268px; width: 190px; height: 31px; padding: 1px 0 0 1px; background: #141450; border: 1px solid #666; color: #8a8a8a; white-space: nowrap; line-height: 14px; overflow: hidden; }
.tip2 { padding-left: 15px; }

/* dialog */
.dlg { position: absolute; left: 1163px; top: 244px; width: 745px; height: 510px; padding: 0 6px 8px; display: flex; flex-direction: column; background: rgba(190, 205, 235, .16); backdrop-filter: blur(6px); border: 1px solid #606060; border-radius: 6px 6px 2px 2px; box-shadow: inset 0 0 0 1px rgba(255, 255, 255, .35); }
.cap { height: 27px; flex: none; display: flex; align-items: center; margin: 0 -4px 0 0; }
.capic { width: 15px; height: 15px; margin: 2px 6px 0 0; flex: none; }
.captx { flex: 1; color: #1a1a1a; text-shadow: 0 0 3px #cfcfcf, 0 0 6px #b0b0b0, 0 0 10px #909090; margin-top: 2px; }
.wbtns { display: flex; align-self: flex-start; border: 1px solid #888; border-top: 0; border-radius: 0 0 4px 4px; background: rgba(255, 255, 255, .08); }
.wb { height: 17px; display: flex; align-items: center; justify-content: center; border-right: 1px solid #777; color: #fff; }
.wmin { width: 27px; }
.wmin i { width: 10px; height: 3px; margin-top: 5px; background: #eee; border: 1px solid #444; }
.wmax { width: 28px; }
.wmax i { width: 11px; height: 9px; border: 2px solid #fff; box-shadow: 0 0 0 1px #333; }
.wcl { width: 49px; font: bold 13px "Liberation Sans", sans-serif; padding-right: 34px; border: 0; }
.client { flex: 1; min-height: 0; display: flex; flex-direction: column; background: #f0f0f0; border: 1px solid #fff; outline: 1px solid #888; padding: 1px 1px 0; }
.tabs { display: flex; height: 21px; flex: none; align-items: flex-end; position: relative; z-index: 1; margin-bottom: -1px; }
.tab { height: 19px; padding: 2px 4px 0; background: #e4e4e4; border: 1px solid #999; white-space: nowrap; text-align: center; width: 67px; }
.tab.on { height: 21px; width: 76px; background: #fff; border-bottom-color: #fff; }
.tabpanel { height: 410px; flex: none; border: 1px solid #aaa; padding: 4px 0 0 2px; background: #f0f0f0; }
.filt { height: 22px; display: flex; align-items: center; white-space: nowrap; }
.radio { width: 13px; height: 13px; flex: none; border-radius: 50%; background: radial-gradient(circle, #f6f6f6 30%, #c0c0c0 80%); border: 1px solid #999; }
.radio.on { background: radial-gradient(circle, #1c4c88 35%, #e8f0f8 45%); border-color: #666; }
.ft { flex: none; }
.f1 { margin-left: 8px; width: 59px; }
.f2 { margin-left: 8px; }
.fsep { width: 1px; height: 22px; background: #888; flex: none; margin: 0 3px 0 9px; }
.chk { width: 13px; height: 13px; flex: none; border: 1px solid #777; background: #e8eef8; color: #2040a0; font: bold 11px/11px "DejaVu Sans", sans-serif; text-align: center; }
.chk.dis { border-color: #bbb; color: #aaa; background: #f0f0f0; }
.f3 { margin-left: 8px; }
.filt .f3 + .fsep { margin-left: 7px; }
.f4 { color: #1a1a60; }
.fcombo { width: 125px; height: 22px; display: flex; margin-left: 3px; background: #fff; border: 1px solid #888; flex: none; }
.fcombo + .fsep { margin-left: 4px; }
.fcombo span { flex: 1; padding: 2px 3px; }
.f5 { margin-left: 8px; color: #a0a0a0; }
.gridbox { margin: 3px 0 0 2px; height: 375px; background: #fff; border: 1px solid #a0a0a0; padding: 1px 0 0; }
.qty { width: 658px; table-layout: fixed; border-collapse: collapse; font: 11px/14px "Liberation Mono", monospace; }
.qty td { height: 19px; padding: 0 2px 0 1px; white-space: nowrap; overflow: hidden; font-family: "Liberation Mono", "Noto Sans CJK SC", monospace; }
.c36 { width: 36px; }
.c53 { width: 53px; }
.c65 { width: 65px; }
.c77 { width: 77px; }
.c71 { width: 71px; }
.c71b { width: 71px; }
.c88 { width: 89px; }
.c78 { width: 77px; }
.hd td { background: #789fd0; color: #eef4ff; text-align: center; border: 1px solid #b4c8e4; font: 12px/14px "Noto Sans CJK SC", sans-serif; }
.hd .pink { color: #c84fb4; }
.hd .lft { text-align: left; }
.d td { text-align: right; border: 1px solid #000080; font-size: 11px; letter-spacing: -.6px; }
.d .rh { background: #789fd0; border-color: #b4c8e4; text-align: center; color: #102040; }
.d .pur { color: #600060; }
.w td { background: #fff; }
.y td { background: #ffffe4; }
.c td { background: #80ffff; }
.d .base { background: #e0f0ff; text-align: center; font: 12px "Noto Sans CJK SC", sans-serif; letter-spacing: 0; }
.d .ctr { text-align: center; font-family: "Noto Sans CJK SC", sans-serif; font-size: 12px; letter-spacing: 0; }
.d .sub { background: #a4ccf0; text-align: center; font: 12px "Noto Sans CJK SC", sans-serif; letter-spacing: 0; }
.foot { flex: 1; display: flex; align-items: flex-start; padding: 8px 0 0 5px; gap: 18px; }
.btn { height: 22px; text-align: center; line-height: 20px; border: 1px solid #8a8a8a; border-radius: 3px; background: linear-gradient(#f6f6f6, #e8e8e8 50%, #d6d6d6); flex: none; white-space: nowrap; }
.b1w { width: 126px; margin-right: 5px; }
.b2w { width: 81px; }
.b3w { width: 102px; margin-right: 278px; }
.quit { width: 75px; background: linear-gradient(#e8f6fd, #cbe8f8 50%, #a8d8f0); border: 1px solid #3c9ad0; box-shadow: 0 0 2px #6ec0f0; }
.notes { position: absolute; left: 0; top: 0; width: 1883px; height: 915px; pointer-events: none; }
.notes polygon { fill: #ff2010; }
```
